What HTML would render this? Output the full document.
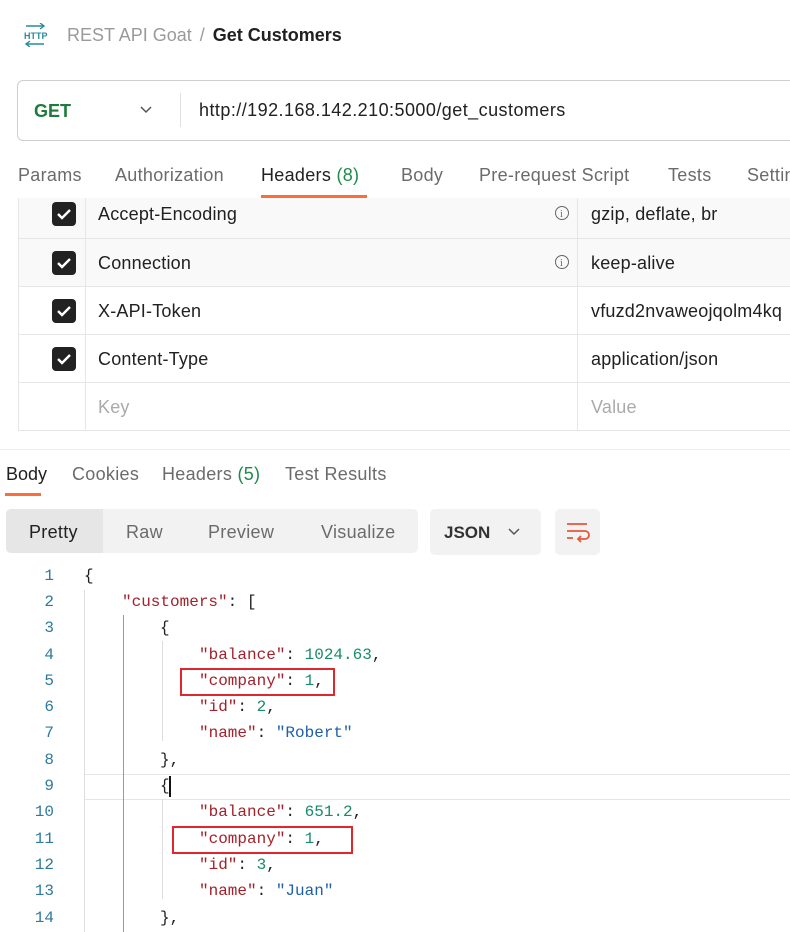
<!DOCTYPE html>
<html><head><style>
body{margin:0;width:790px;height:932px;overflow:hidden;background:#fff;font-family:"Liberation Sans",sans-serif;position:relative;color:#212121}
.a{position:absolute;white-space:nowrap}
.t{font-size:18px;letter-spacing:0.3px;color:#6b6b6b}
.row{position:absolute;left:18px;width:772px;border-bottom:1px solid #e6e6e6}
.cb{position:absolute;left:52px;width:24px;height:24px;background:#222;border-radius:4px}
.cb svg{position:absolute;left:4px;top:5px}
.k{position:absolute;left:98px;font-size:18px;letter-spacing:0.2px}
.v{position:absolute;left:591px;font-size:18px;letter-spacing:0.2px}
.code{font-family:"Liberation Mono",monospace;font-size:16px}
.ln{position:absolute;width:54px;text-align:right;color:#2d7a9e;font-family:"Liberation Mono",monospace;font-size:16px}
.s{color:#a3212b}.n{color:#1a8a6b}.q{color:#1f5fa8}
</style></head><body>
<svg class="a" style="left:22px;top:23px" width="26" height="24" viewBox="0 0 26 24"><path d="M4 3h18M18 0l4 3-4 3M4 21h18M8 18l-4 3 4 3" stroke="#2a8a9c" stroke-width="1.4" fill="none"/><text x="2" y="16" font-size="9" font-family="Liberation Sans" font-weight="bold" fill="#2a8a9c">HTTP</text></svg>
<div class="a" style="left:67px;top:25px;font-size:18px;color:#9a9a9a">REST API Goat <span style="margin:0 3px">/</span> <b style="color:#212121">Get Customers</b></div>
<div class="a" style="left:17px;top:80px;width:790px;height:59px;border:1px solid #cfcfcf;border-radius:6px"></div>
<div class="a" style="left:34px;top:101px;font-size:18px;font-weight:bold;color:#1f7a3c">GET</div>
<svg class="a" style="left:139px;top:105px" width="14" height="10"><path d="M2 2l5 5 5-5" stroke="#555" stroke-width="1.5" fill="none"/></svg>
<div class="a" style="left:180px;top:93px;width:1px;height:34px;background:#e0e0e0"></div>
<div class="a" style="left:199px;top:100px;font-size:18px;letter-spacing:0.45px">http://192.168.142.210:5000/get_customers</div>
<div class="a t" style="left:18px;top:165px">Params</div>
<div class="a t" style="left:115px;top:165px">Authorization</div>
<div class="a" style="left:261px;top:165px;font-size:18px;letter-spacing:0.3px;color:#212121">Headers <span style="color:#1f8a4c">(8)</span></div>
<div class="a" style="left:261px;top:195px;width:106px;height:3px;background:#ff6c37"></div>
<div class="a t" style="left:401px;top:165px">Body</div>
<div class="a t" style="left:479px;top:165px">Pre-request Script</div>
<div class="a t" style="left:668px;top:165px">Tests</div>
<div class="a t" style="left:747px;top:165px">Settin</div>
<div class="a" style="left:18px;top:198px;width:772px;height:89px;background:#f9f9f9"></div>
<div class="row" style="top:198px;height:40px"></div>
<div class="row" style="top:239px;height:47px"></div>
<div class="row" style="top:287px;height:47px"></div>
<div class="row" style="top:335px;height:47px"></div>
<div class="row" style="top:383px;height:47px"></div>
<div class="a" style="left:18px;top:198px;width:1px;height:233px;background:#e6e6e6"></div>
<div class="a" style="left:85px;top:198px;width:1px;height:233px;background:#e6e6e6"></div>
<div class="a" style="left:577px;top:198px;width:1px;height:233px;background:#e6e6e6"></div>
<div class="cb" style="top:202px"><svg width="16" height="14"><path d="M2 7l4 4 8-8" stroke="#fff" stroke-width="2.4" fill="none"/></svg></div>
<div class="cb" style="top:251px"><svg width="16" height="14"><path d="M2 7l4 4 8-8" stroke="#fff" stroke-width="2.4" fill="none"/></svg></div>
<div class="cb" style="top:299px"><svg width="16" height="14"><path d="M2 7l4 4 8-8" stroke="#fff" stroke-width="2.4" fill="none"/></svg></div>
<div class="cb" style="top:347px"><svg width="16" height="14"><path d="M2 7l4 4 8-8" stroke="#fff" stroke-width="2.4" fill="none"/></svg></div>
<div class="k" style="top:204px">Accept-Encoding</div><div class="v" style="top:204px">gzip, deflate, br</div>
<div class="k" style="top:253px">Connection</div><div class="v" style="top:253px">keep-alive</div>
<div class="k" style="top:301px">X-API-Token</div><div class="v" style="top:301px">vfuzd2nvaweojqolm4kq</div>
<div class="k" style="top:349px">Content-Type</div><div class="v" style="top:349px">application/json</div>
<div class="k" style="top:397px;color:#aaa">Key</div><div class="v" style="top:397px;color:#aaa">Value</div>
<svg class="a" style="left:554px;top:205px" width="16" height="16"><circle cx="8" cy="8" r="6.5" stroke="#666" fill="none"/><text x="6" y="12" font-size="10" font-family="Liberation Serif" fill="#666">i</text></svg>
<svg class="a" style="left:554px;top:254px" width="16" height="16"><circle cx="8" cy="8" r="6.5" stroke="#666" fill="none"/><text x="6" y="12" font-size="10" font-family="Liberation Serif" fill="#666">i</text></svg>
<div class="a" style="left:0;top:449px;width:790px;height:1px;background:#eee"></div>
<div class="a" style="left:6px;top:464px;font-size:18px">Body</div>
<div class="a" style="left:5px;top:493px;width:36px;height:3px;background:#ff6c37"></div>
<div class="a t" style="left:72px;top:464px">Cookies</div>
<div class="a t" style="left:162px;top:464px">Headers <span style="color:#1f8a4c">(5)</span></div>
<div class="a t" style="left:285px;top:464px">Test Results</div>
<div class="a" style="left:6px;top:509px;width:412px;height:44px;background:#f2f2f2;border-radius:5px"></div>
<div class="a" style="left:6px;top:509px;width:97px;height:44px;background:#e6e6e6;border-radius:5px 0 0 5px"></div>
<div class="a" style="left:29px;top:522px;font-size:18px;letter-spacing:0.3px">Pretty</div>
<div class="a t" style="left:126px;top:522px">Raw</div>
<div class="a t" style="left:208px;top:522px">Preview</div>
<div class="a t" style="left:321px;top:522px">Visualize</div>
<div class="a" style="left:430px;top:509px;width:111px;height:46px;background:#f2f2f2;border-radius:5px"></div>
<div class="a" style="left:444px;top:523px;font-size:17px;font-weight:bold;color:#333">JSON</div>
<svg class="a" style="left:507px;top:527px" width="14" height="10"><path d="M2 2l5 5 5-5" stroke="#555" stroke-width="1.5" fill="none"/></svg>
<div class="a" style="left:555px;top:509px;width:45px;height:46px;background:#f2f2f2;border-radius:5px"></div>
<svg class="a" style="left:565px;top:521px" width="26" height="22"><path d="M2 3h20M2 10h18a4 4 0 0 1 0 8h-6M2 17h6M16 15l-3 3 3 3" stroke="#e8573a" stroke-width="1.8" fill="none"/></svg>
<div class="a" style="left:84px;top:774px;width:706px;height:24px;border-top:1px solid #e6e6e6;border-bottom:1px solid #e6e6e6"></div>
<div class="a" style="left:84px;top:590px;width:1px;height:342px;background:#ddd"></div>
<div class="a" style="left:123px;top:615px;width:1px;height:317px;background:#999"></div>
<div class="a" style="left:162px;top:641px;width:1px;height:100px;background:#ddd"></div>
<div class="a" style="left:162px;top:799px;width:1px;height:100px;background:#ddd"></div>
<div class="a" style="left:180px;top:668px;width:151px;height:24px;border:2px solid #e0272e"></div>
<div class="a" style="left:172px;top:826px;width:177px;height:24px;border:2px solid #e0272e"></div>
<div class="a" style="left:169px;top:776px;width:2px;height:21px;background:#111"></div>
<div class="ln" style="top:567px">1</div><div class="ln" style="top:593px">2</div><div class="ln" style="top:619px">3</div><div class="ln" style="top:646px">4</div><div class="ln" style="top:672px">5</div><div class="ln" style="top:698px">6</div><div class="ln" style="top:724px">7</div><div class="ln" style="top:751px">8</div><div class="ln" style="top:777px">9</div><div class="ln" style="top:803px">10</div><div class="ln" style="top:830px">11</div><div class="ln" style="top:856px">12</div><div class="ln" style="top:882px">13</div><div class="ln" style="top:909px">14</div>
<div class="a code" style="left:84px;top:567px">{</div>
<div class="a code" style="left:122px;top:593px"><span class="s">"customers"</span>: [</div>
<div class="a code" style="left:160px;top:619px">{</div>
<div class="a code" style="left:199px;top:646px"><span class="s">"balance"</span>: <span class="n">1024.63</span>,</div>
<div class="a code" style="left:199px;top:672px"><span class="s">"company"</span>: <span class="n">1</span>,</div>
<div class="a code" style="left:199px;top:698px"><span class="s">"id"</span>: <span class="n">2</span>,</div>
<div class="a code" style="left:199px;top:724px"><span class="s">"name"</span>: <span class="q">"Robert"</span></div>
<div class="a code" style="left:160px;top:751px">},</div>
<div class="a code" style="left:160px;top:777px">{</div>
<div class="a code" style="left:199px;top:803px"><span class="s">"balance"</span>: <span class="n">651.2</span>,</div>
<div class="a code" style="left:199px;top:830px"><span class="s">"company"</span>: <span class="n">1</span>,</div>
<div class="a code" style="left:199px;top:856px"><span class="s">"id"</span>: <span class="n">3</span>,</div>
<div class="a code" style="left:199px;top:882px"><span class="s">"name"</span>: <span class="q">"Juan"</span></div>
<div class="a code" style="left:160px;top:909px">},</div>
</body></html>
